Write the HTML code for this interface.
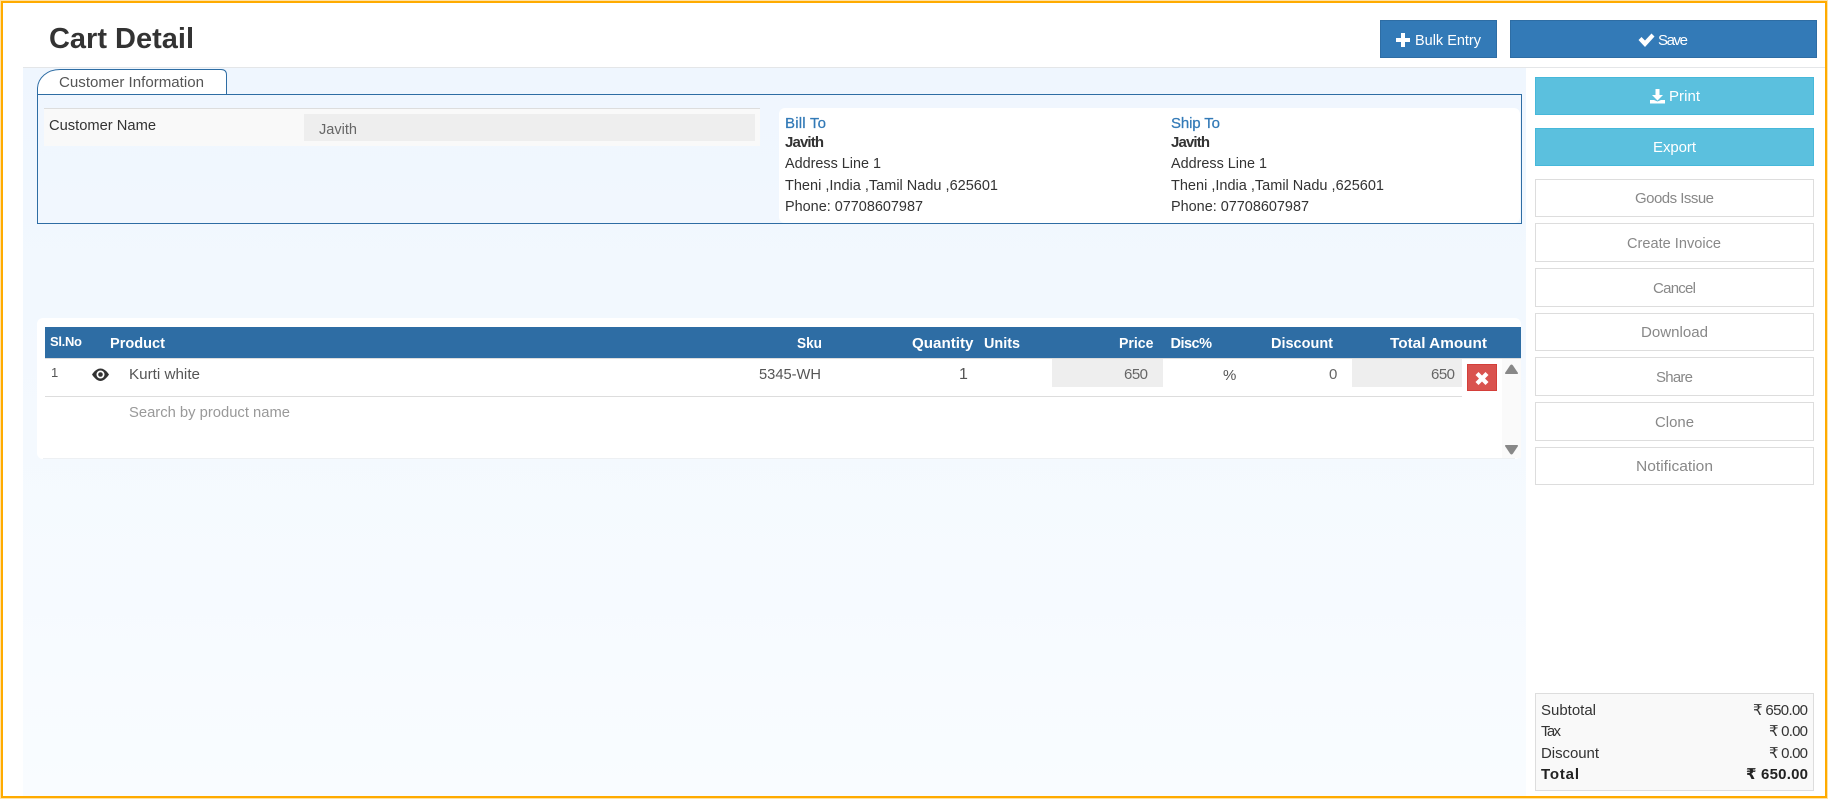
<!DOCTYPE html>
<html lang="en">
<head>
<meta charset="utf-8">
<title>Cart Detail</title>
<style>
html,body{margin:0;padding:0;background:#fff;width:1828px;height:800px;overflow:hidden}
svg{display:block;position:absolute;left:0;top:0}
text{font-family:"Liberation Sans","DejaVu Sans",sans-serif;font-size:15px;fill:#444}
.b{font-weight:700;font-size:14px}
.h{font-weight:700;fill:#fff;font-size:14.500px}
.w{fill:#fff;font-size:15px}
.g{fill:#888;font-size:15px}
.d{fill:#333}
.l{fill:#555}
</style>
</head>
<body>
<svg width="1828" height="800" viewBox="0 0 1828 800" xmlns="http://www.w3.org/2000/svg">
<defs>
<linearGradient id="bg" x1="0" y1="0" x2="0" y2="1"><stop offset="0" stop-color="#eff6fe"/><stop offset="1" stop-color="#f9fcff"/></linearGradient>
</defs>
<rect width="1828" height="800" fill="#fff"/>
<!-- main content background -->
<rect x="23" y="68" width="1503" height="728" fill="url(#bg)"/>
<rect x="23" y="67" width="1802" height="1" fill="#e4e6e8"/>
<!-- sidebar -->
<rect x="1526" y="69" width="299" height="727" rx="6" fill="#fff"/>

<!-- header -->
<text x="49" y="48" class="b d" style="font-size:29px" textLength="145" lengthAdjust="spacingAndGlyphs">Cart Detail</text>
<rect x="1380.500" y="20.500" width="116" height="37" fill="#337ab7" stroke="#2e6da4"/>
<path d="M1401 33h4v5h5v4h-5v5h-4v-5h-5v-4h5z" fill="#fff"/>
<text x="1415" y="45" class="w" textLength="66" lengthAdjust="spacingAndGlyphs">Bulk Entry</text>
<rect x="1510.500" y="20.500" width="306" height="37" fill="#337ab7" stroke="#2e6da4"/>
<path d="M1638.500 40l3-3 3.500 3.500 6.500-7 3 3-9.500 10.500z" fill="#fff"/>
<text x="1658" y="45" class="w" textLength="30" lengthAdjust="spacing">Save</text>

<!-- customer tab -->
<path d="M37.500 94.500V88C38 78 47 69.500 60 69.500H221c3.500 0 5.500 2 5.500 5.500V94.500" fill="#fff" stroke="#2e6da4"/>
<text x="59" y="87" class="l" textLength="145" lengthAdjust="spacingAndGlyphs">Customer Information</text>
<rect x="37.500" y="94.500" width="1484" height="129" fill="none" stroke="#2e6da4" stroke-width="1"/>
<rect x="44" y="108" width="716" height="38" fill="#f9f9f9"/>
<rect x="44" y="108" width="716" height="1" fill="#ddd"/>
<text x="49" y="130" class="d" textLength="107" lengthAdjust="spacingAndGlyphs">Customer Name</text>
<rect x="304" y="114" width="451" height="27" fill="#eee"/>
<text x="319" y="134" style="fill:#666" textLength="38" lengthAdjust="spacingAndGlyphs">Javith</text>

<!-- address card -->
<rect x="779" y="108" width="741" height="115" rx="6" fill="#fff"/>
<text x="785" y="128" style="fill:#337ab7;stroke:#337ab7;stroke-width:.25" textLength="41" lengthAdjust="spacing">Bill To</text>
<text x="785" y="147" class="b d" style="font-size:15px" textLength="39" lengthAdjust="spacing">Javith</text>
<text x="785" y="168" class="d" textLength="96" lengthAdjust="spacingAndGlyphs">Address Line 1</text>
<text x="785" y="190" class="d" textLength="213" lengthAdjust="spacingAndGlyphs">Theni ,India ,Tamil Nadu ,625601</text>
<text x="785" y="211" class="d" textLength="138" lengthAdjust="spacingAndGlyphs">Phone: 07708607987</text>
<text x="1171" y="128" style="fill:#337ab7;stroke:#337ab7;stroke-width:.25" textLength="49" lengthAdjust="spacing">Ship To</text>
<text x="1171" y="147" class="b d" style="font-size:15px" textLength="39" lengthAdjust="spacing">Javith</text>
<text x="1171" y="168" class="d" textLength="96" lengthAdjust="spacingAndGlyphs">Address Line 1</text>
<text x="1171" y="190" class="d" textLength="213" lengthAdjust="spacingAndGlyphs">Theni ,India ,Tamil Nadu ,625601</text>
<text x="1171" y="211" class="d" textLength="138" lengthAdjust="spacingAndGlyphs">Phone: 07708607987</text>

<!-- table panel -->
<rect x="37" y="318" width="1484" height="141" rx="6" fill="#fff"/>
<rect x="43" y="458" width="1472" height="1" fill="#edf0f3"/>
<path d="M45 327H1521V358H45Z" fill="#2e6da4"/>
<rect x="45" y="358" width="1476" height="1" fill="#ddd"/>
<text x="50" y="346" class="h" style="font-size:13px" textLength="32" lengthAdjust="spacing">Sl.No</text>
<text x="110" y="348" class="h" textLength="55" lengthAdjust="spacingAndGlyphs">Product</text>
<text x="797" y="348" class="h" textLength="25" lengthAdjust="spacingAndGlyphs">Sku</text>
<text x="912" y="348" class="h" textLength="61.500" lengthAdjust="spacingAndGlyphs">Quantity</text>
<text x="984" y="348" class="h" textLength="36" lengthAdjust="spacingAndGlyphs">Units</text>
<text x="1119" y="348" class="h" textLength="34.500" lengthAdjust="spacingAndGlyphs">Price</text>
<text x="1170.500" y="348" class="h" textLength="41.500" lengthAdjust="spacing">Disc%</text>
<text x="1271" y="348" class="h" textLength="62" lengthAdjust="spacingAndGlyphs">Discount</text>
<text x="1390" y="348" class="h" textLength="97" lengthAdjust="spacingAndGlyphs">Total Amount</text>

<!-- row -->
<text x="51" y="377" class="l" style="font-size:13px" textLength="7" lengthAdjust="spacing">1</text>
<path fill-rule="evenodd" d="M92 374.500C95 370 98 368.500 100.500 368.500S106 370 109 374.500C106 379 103 381 100.500 381S95 379 92 374.500ZM100.500 370.500a4 4 0 1 0 0 8a4 4 0 1 0 0-8Z" fill="#333"/>
<circle cx="100.500" cy="374.500" r="2.300" fill="#333"/>
<text x="129" y="379" class="l" textLength="71" lengthAdjust="spacingAndGlyphs">Kurti white</text>
<text x="759" y="379" class="l" textLength="62" lengthAdjust="spacingAndGlyphs">5345-WH</text>
<text x="959" y="379" class="l" style="font-size:16px" textLength="8" lengthAdjust="spacing">1</text>
<rect x="1052" y="359" width="111" height="28" fill="#eee"/>
<text x="1124" y="379" style="fill:#666" textLength="24" lengthAdjust="spacing">650</text>
<text x="1223" y="380" class="l" textLength="13" lengthAdjust="spacing">%</text>
<text x="1329" y="379" style="fill:#666" textLength="8" lengthAdjust="spacing">0</text>
<rect x="1352" y="359" width="110" height="28" fill="#eee"/>
<text x="1431" y="379" style="fill:#666" textLength="24" lengthAdjust="spacing">650</text>
<rect x="1467.500" y="364.500" width="29" height="26" fill="#d9534f" stroke="#d43f3a"/>
<path d="M1478.500 372l3.500 3.500 3.500-3.500 3 3-3.500 3.500 3.500 3.500-3 3-3.500-3.500-3.500 3.500-3-3 3.500-3.500-3.500-3.500z" fill="#fff"/>
<rect x="45" y="396" width="1417" height="1" fill="#ddd"/>
<text x="129" y="417" style="fill:#999" textLength="161" lengthAdjust="spacingAndGlyphs">Search by product name</text>
<!-- scrollbar -->
<rect x="1502" y="359" width="19" height="99" fill="#fafafa"/>
<path d="M1505 373.500q0-1 1-2l4-6q1.500-2 3 0l4 6q1 1 1 2q0 .5-1 .5h-11q-1 0-1-.5z" fill="#888"/>
<path d="M1505 445.500q0-.5 1-.5h11q1 0 1 .5q0 1-1 2l-4 6q-1.500 2-3 0l-4-6q-1-1-1-2z" fill="#888"/>

<!-- side buttons -->
<rect x="1535.500" y="77.500" width="278" height="37" fill="#5bc0de" stroke="#46b8da"/>
<path d="M1655.500 89h4v6h3.500l-5.500 5.500-5.500-5.500h3.500zM1650 100h4l3.500 1.500 3.500-1.500h4v3.500h-15z" fill="#fff"/>
<text x="1669" y="101" class="w" textLength="31" lengthAdjust="spacing">Print</text>
<rect x="1535.500" y="128.500" width="278" height="37" fill="#5bc0de" stroke="#46b8da"/>
<text x="1653" y="152" class="w" textLength="43" lengthAdjust="spacing">Export</text>

<g fill="#fff" stroke="#ddd">
<rect x="1535.500" y="179.500" width="278" height="37"/>
<rect x="1535.500" y="223.500" width="278" height="38"/>
<rect x="1535.500" y="268.500" width="278" height="38"/>
<rect x="1535.500" y="313.500" width="278" height="37"/>
<rect x="1535.500" y="357.500" width="278" height="38"/>
<rect x="1535.500" y="402.500" width="278" height="38"/>
<rect x="1535.500" y="447.500" width="278" height="37"/>
</g>
<text x="1635" y="203" class="g" textLength="79" lengthAdjust="spacing">Goods Issue</text>
<text x="1627" y="248" class="g" textLength="94" lengthAdjust="spacingAndGlyphs">Create Invoice</text>
<text x="1653" y="293" class="g" textLength="43" lengthAdjust="spacing">Cancel</text>
<text x="1641" y="337" class="g" textLength="67" lengthAdjust="spacingAndGlyphs">Download</text>
<text x="1656" y="382" class="g" textLength="37" lengthAdjust="spacing">Share</text>
<text x="1655" y="427" class="g" textLength="39" lengthAdjust="spacingAndGlyphs">Clone</text>
<text x="1636" y="471" class="g" textLength="77" lengthAdjust="spacingAndGlyphs">Notification</text>

<!-- summary -->
<rect x="1535.500" y="693.500" width="278" height="97" fill="#f9f9f9" stroke="#ddd"/>
<text x="1541" y="715" class="d" textLength="55" lengthAdjust="spacing">Subtotal</text>
<text x="1541" y="736" class="d" textLength="20" lengthAdjust="spacing">Tax</text>
<text x="1541" y="758" class="d" textLength="58" lengthAdjust="spacing">Discount</text>
<text x="1541" y="779" class="b" style="fill:#222;font-size:15px" textLength="38" lengthAdjust="spacing">Total</text>
<text x="1753" y="715" class="d" textLength="55" lengthAdjust="spacing">₹ 650.00</text>
<text x="1769" y="736" class="d" textLength="39" lengthAdjust="spacing">₹ 0.00</text>
<text x="1769" y="758" class="d" textLength="39" lengthAdjust="spacing">₹ 0.00</text>
<text x="1746" y="779" class="b" style="fill:#222;font-size:15px" textLength="62" lengthAdjust="spacing">₹ 650.00</text>

<!-- outer orange frame -->
<rect x="0.500" y="0.500" width="1827" height="798" fill="none" stroke="#ffe2a6" stroke-width="1"/>
<rect x="2" y="2" width="1824" height="795" fill="none" stroke="#ffab00" stroke-width="2"/>
</svg>
</body>
</html>
